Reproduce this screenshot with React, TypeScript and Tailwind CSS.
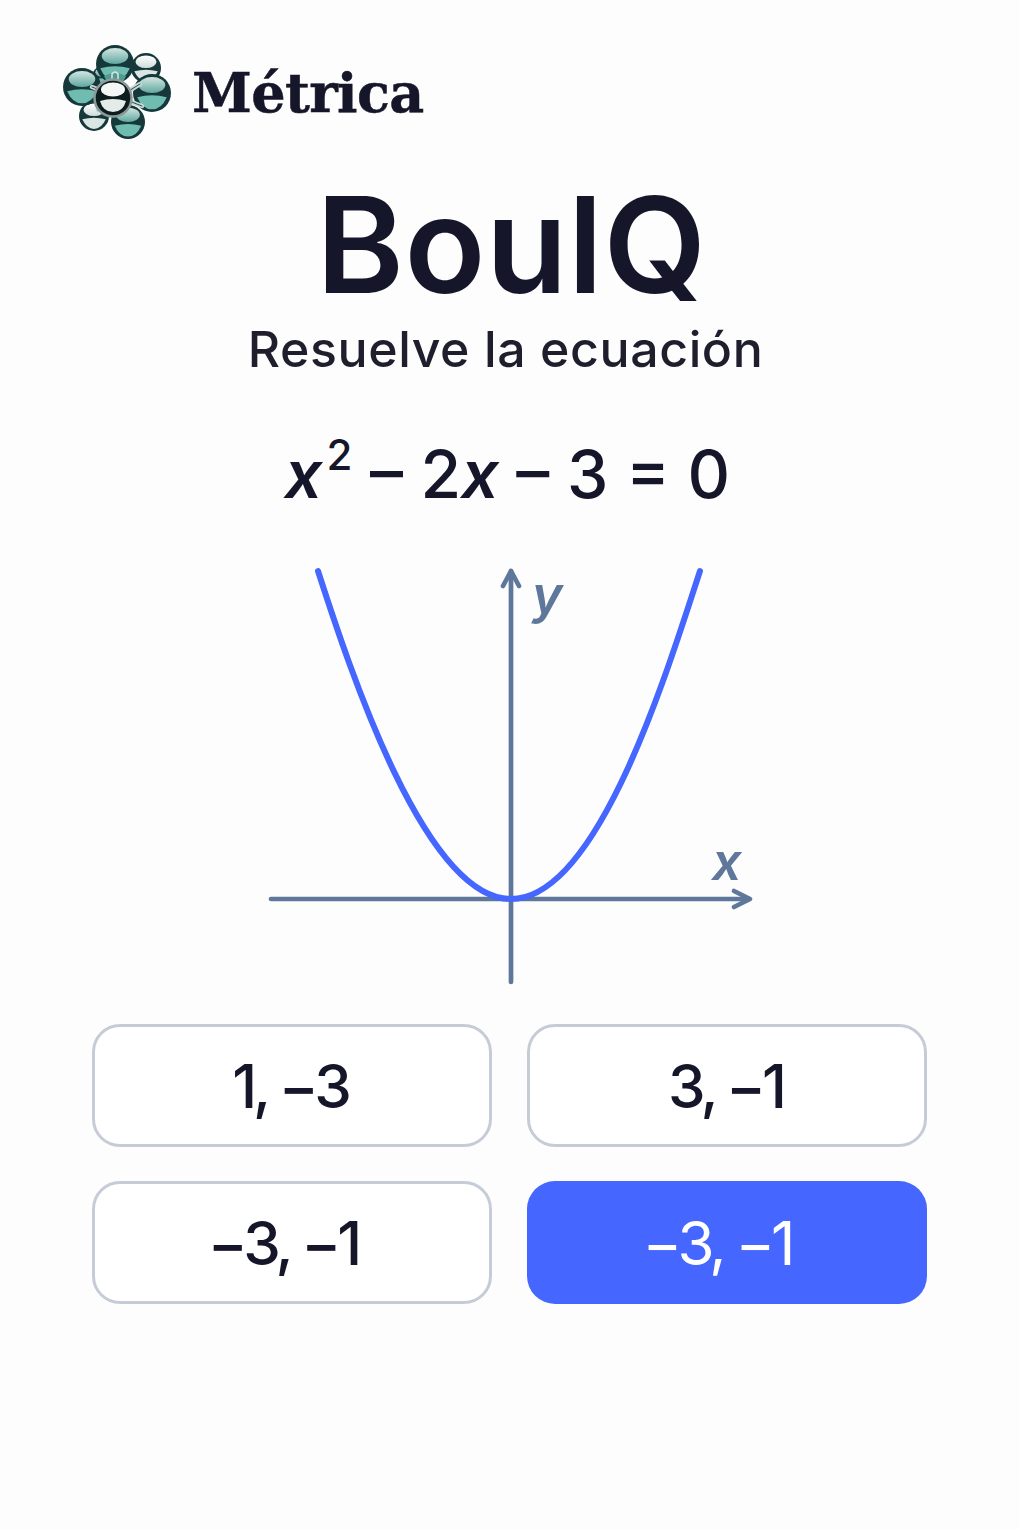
const answers = [
  { label: '1, −3', active: false, offset: 'pr-[4px]' },
  { label: '3, −1', active: false, offset: 'pr-[3px]' },
  { label: '−3, −1', active: false, offset: 'pr-[18px]' },
  { label: '−3, −1', active: true, offset: 'pr-[20px]' },
];

function Sphere({ cx, cy, r, chrome }: { cx: number; cy: number; r: number; chrome?: boolean }) {
  return (
    <g>
      <circle cx={cx} cy={cy} r={r} fill="#14383a" />
      <ellipse cx={cx} cy={cy - r * 0.42} rx={r * 0.7} ry={r * 0.42} fill={chrome ? 'url(#hiChrome)' : 'url(#hiTeal)'} />
      <path
        d={`M${cx - r * 0.78} ${cy + r * 0.22} Q${cx} ${cy + r * 0.02} ${cx + r * 0.78} ${cy + r * 0.22} Q${cx + r * 0.5} ${cy + r * 0.86} ${cx} ${cy + r * 0.86} Q${cx - r * 0.5} ${cy + r * 0.86} ${cx - r * 0.78} ${cy + r * 0.22}Z`}
        fill={chrome ? '#d9e6e3' : '#70bcb1'}
      />
    </g>
  );
}

function Logo() {
  return (
    <svg width="112" height="95" viewBox="60 45 112 95" fill="none" className="shrink-0">
      <defs>
        <linearGradient id="hiTeal" x1="0" y1="0" x2="0" y2="1">
          <stop offset="0" stopColor="#d4e6e2" />
          <stop offset="1" stopColor="#5fa89f" />
        </linearGradient>
        <linearGradient id="hiChrome" x1="0" y1="0" x2="0" y2="1">
          <stop offset="0" stopColor="#ffffff" />
          <stop offset="1" stopColor="#cfdcd9" />
        </linearGradient>
        <filter id="soft">
          <feGaussianBlur stdDeviation="0.7" />
        </filter>
      </defs>
      <g filter="url(#soft)">
        <Sphere cx={146} cy={68} r={15} chrome />
        <Sphere cx={103} cy={77} r={11} />
        <Sphere cx={115} cy={64} r={19} />
        <path d="M104 76 Q115 70 126 76 L122 84 H108Z" fill="#4f9b91" />
        <path d="M112 82 V74 Q115 70 118 74 V82" stroke="#d7e6e3" strokeWidth="1.5" />
        <Sphere cx={94} cy={116} r={15} chrome />
        <Sphere cx={128} cy={122} r={17} />
        <Sphere cx={82} cy={87} r={19} />
        <Sphere cx={152} cy={93} r={19} />
        <path d="M92 87 L142 106 M140 84 L98 110" stroke="#c8d8d5" strokeWidth="4.5" strokeLinecap="round" />
        <path d="M92 87 L142 106 M140 84 L98 110" stroke="#2c4f4c" strokeWidth="1" strokeLinecap="round" />
        <circle cx="113" cy="98" r="18.5" fill="#101d1e" stroke="#8b9a98" strokeWidth="2.5" />
        <ellipse cx="113" cy="89.5" rx="12" ry="7" fill="#f4f7f6" />
        <path d="M100 101 Q113 97 126 101 Q123 112 113 112 Q103 112 100 101Z" fill="#e4ebe9" />
      </g>
    </svg>
  );
}

function Graph() {
  return (
    <svg width="500" height="430" viewBox="260 560 500 430" fill="none" className="block">
      <g stroke="#5f779b" strokeWidth="4.7" strokeLinecap="round" strokeLinejoin="round">
        <path d="M271 899 H749" />
        <path d="M734 891 L750 899 L734 907" />
        <path d="M511 982 V571" />
        <path d="M503 586 L511 571 L519 586" />
      </g>
      <path
        d="M318 571 C350 670 425 899 511 899 C598 899 667 672 700 571"
        stroke="#4566ff"
        strokeWidth="6"
        strokeLinecap="round"
      />
      <text x="532" y="613" fill="#5f779b" fontSize="52" fontStyle="italic" fontWeight="600" fontFamily="Inter, sans-serif">y</text>
      <text x="712" y="880" fill="#5f779b" fontSize="52" fontStyle="italic" fontWeight="600" fontFamily="Inter, sans-serif">x</text>
    </svg>
  );
}

export default function App() {
  return (
    <div className="min-h-[1529px] bg-[#fdfdfd] pt-[45px] font-['Inter',sans-serif] text-[#16162a]">
      <header className="flex items-center gap-5 pl-[60px]">
        <Logo />
        <span className="font-['DejaVu_Serif',serif] text-[54px] font-bold leading-none tracking-[-0.6px] [-webkit-text-stroke:0.5px_#16162a]">
          Métrica
        </span>
      </header>

      <div className="flex flex-col items-center">
        <h1 className="mt-[35px] pl-[4px] text-[133px] font-semibold leading-[140px] tracking-[0.6px]">BoulQ</h1>
        <p className="mt-[4px] pr-[8px] text-[50px] font-medium leading-[60px] tracking-[0.6px] text-[#1e1e2c]">
          Resuelve la ecuación
        </p>
        <div className="mt-[57px] pr-[4px] text-[66px] font-medium leading-[76px]">
          <i className="font-semibold">x</i>
          <sup className="ml-[4px] align-[7px] text-[42px] font-medium leading-none">2</sup>
          <span> – 2<i className="font-semibold">x</i> – 3 = 0</span>
        </div>
        <div className="mt-[48px]">
          <Graph />
        </div>
      </div>

      <div className="mx-auto mt-[34px] grid w-[835px] grid-cols-2 gap-x-[35px] gap-y-[34px]">
        {answers.map((a, i) => (
          <button
            key={i}
            className={
              a.active
                ? `flex h-[123px] items-center justify-center rounded-[28px] bg-[#4566ff] text-[60px] tracking-[-4px] text-white ${a.offset}`
                : `flex h-[123px] items-center justify-center rounded-[28px] border-[3px] border-[#c6ccd6] bg-white text-[60px] font-medium tracking-[-4px] text-[#16162a] ${a.offset}`
            }
          >
            {a.label}
          </button>
        ))}
      </div>
    </div>
  );
}
